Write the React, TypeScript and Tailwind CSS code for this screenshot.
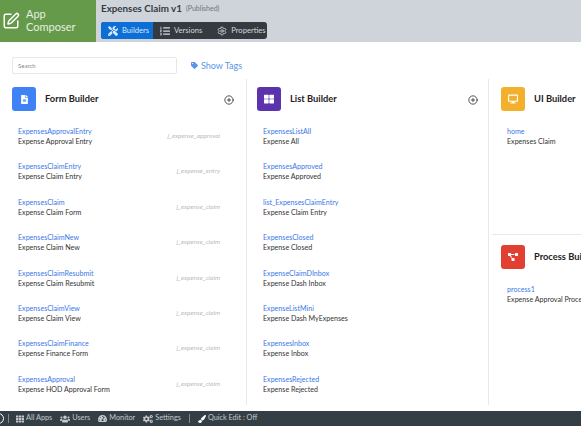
import { PlusCircle, Settings, SquarePen } from "lucide-react";
import { FaCogs, FaDesktop, FaFileAlt, FaListOl, FaPaintBrush, FaProjectDiagram, FaTachometerAlt, FaTag, FaTh, FaThLarge, FaTools, FaUsers } from "react-icons/fa";
import type { ReactNode } from "react";

const forms = [
	["ExpensesApprovalEntry", "Expense Approval Entry", "j_expense_approval"],
	["ExpensesClaimEntry", "Expense Claim Entry", "j_expense_entry"],
	["ExpensesClaim", "Expense Claim Form", "j_expense_claim"],
	["ExpensesClaimNew", "Expense Claim New", "j_expense_claim"],
	["ExpensesClaimResubmit", "Expense Claim Resubmit", "j_expense_claim"],
	["ExpensesClaimView", "Expense Claim View", "j_expense_claim"],
	["ExpensesClaimFinance", "Expense Finance Form", "j_expense_claim"],
	["ExpensesApproval", "Expense HOD Approval Form", "j_expense_claim"],
];

const lists = [
	["ExpensesListAll", "Expense All"],
	["ExpensesApproved", "Expense Approved"],
	["list_ExpensesClaimEntry", "Expense Claim Entry"],
	["ExpensesClosed", "Expense Closed"],
	["ExpenseClaimDInbox", "Expense Dash Inbox"],
	["ExpenseListMini", "Expense Dash MyExpenses"],
	["ExpensesInbox", "Expense Inbox"],
	["ExpensesRejected", "Expense Rejected"],
];

function BuilderHeader({ color, icon, title, add }: { color: string; icon: ReactNode; title: string; add?: boolean }) {
	return (
		<div className="flex h-6 items-center">
			<div className={`flex h-6 w-6 shrink-0 items-center justify-center rounded-[3px] text-white ${color}`}>{icon}</div>
			<div className="ml-[9px] whitespace-nowrap text-[9.3px] font-bold text-[#222]">{title}</div>
			{add && <PlusCircle className="ml-auto mt-[2px] h-[10px] w-[10px] text-[#333]" strokeWidth={2} />}
		</div>
	);
}

function Item({ name, label, tag }: { name: string; label: string; tag?: string }) {
	return (
		<div className="flex h-[35.4px] items-start justify-between whitespace-nowrap">
			<div className="text-[7.1px] leading-[10px]">
				<div className="text-[#3b78e7]">{name}</div>
				<div className="text-[#333]">{label}</div>
			</div>
			{tag && <div className="mt-[4px] text-[6.5px] italic leading-[10px] text-[#bbb]">{tag}</div>}
		</div>
	);
}

function Tab({ icon, label, active }: { icon: ReactNode; label: string; active?: boolean }) {
	return (
		<div className={`flex h-full items-center gap-[4px] pl-[7px] pr-[4px] text-[7.6px] ${active ? "rounded-l-[3px] bg-[#0b6fd6] text-[#dbe9fb]" : "text-[#d5d8db]"}`}>
			{icon}
			{label}
		</div>
	);
}

function FootItem({ icon, label }: { icon: ReactNode; label: string }) {
	return (
		<div className="flex items-center gap-[2px] whitespace-nowrap">
			{icon}
			{label}
		</div>
	);
}

export default function App() {
	return (
		<div className="flex h-[426px] w-[581px] flex-col overflow-hidden bg-white font-['Lato',sans-serif]">
			{/* Top bar */}
			<div className="flex h-[42px] shrink-0 bg-[#ced4da]">
				<div className="flex w-[96px] items-center bg-[#659a4b] pl-[2px] text-white">
					<SquarePen className="h-[18px] w-[18px]" strokeWidth={2} />
					<div className="mb-[3px] ml-[6px] text-[11px] leading-[13px] text-[#e6efe0]">
						App
						<br />
						Composer
					</div>
				</div>
				<div className="ml-[5px] pt-[2px]">
					<div className="flex h-[12px] items-center whitespace-nowrap text-[9.8px] font-bold text-[#343a40]">
						Expenses Claim v1
						<span className="ml-[4px] text-[7px] font-normal text-[#6c757d]">(Published)</span>
					</div>
					<div className="mt-[8px] flex h-[17px] w-[166px] rounded-[3px] bg-[#343a40]">
						<Tab active icon={<FaTools className="h-[10px] w-[10px]" />} label="Builders" />
						<Tab icon={<FaListOl className="h-[10px] w-[10px]" />} label="Versions" />
						<Tab icon={<Settings className="ml-[4px] h-[10px] w-[10px]" />} label="Properties" />
					</div>
				</div>
			</div>

			{/* Search */}
			<div className="flex shrink-0 items-center px-[12px] pt-[15px]">
				<div className="flex h-[17px] w-[165px] items-center rounded-[2px] border border-[#e4e6e8] pl-[5px] text-[6px] text-[#888]">Search</div>
				<div className="ml-[14px] flex items-center gap-[3px] text-[9px] text-[#5a96e8]">
					<FaTag className="h-[7px] w-[7px]" />
					Show Tags
				</div>
			</div>

			{/* Builders */}
			<div className="mb-[6px] mt-[5px] flex min-h-0 flex-1">
				<div className="w-[247px] shrink-0 border-r border-[#e8e8e8] pl-[12px] pr-[12px] pt-[8px]">
					<BuilderHeader color="bg-[#3f82f5]" icon={<FaFileAlt className="h-[9px] w-[9px]" />} title="Form Builder" add />
					<div className="mt-[16px] pl-[6px] pr-[14px]">
						{forms.map(([name, label, tag]) => (
							<Item key={name} name={name} label={label} tag={tag} />
						))}
					</div>
				</div>
				<div className="w-[242px] shrink-0 border-r border-[#e8e8e8] pl-[10px] pr-[10px] pt-[8px]">
					<BuilderHeader color="bg-[#5b34ad]" icon={<FaThLarge className="h-[10px] w-[10px]" />} title="List Builder" add />
					<div className="mt-[16px] pl-[6px]">
						{lists.map(([name, label]) => (
							<Item key={name} name={name} label={label} />
						))}
					</div>
				</div>
				<div className="min-w-0 flex-1 overflow-hidden">
					<div className="h-[155px] pl-[12px] pt-[8px]">
						<BuilderHeader color="bg-[#f3b02c]" icon={<FaDesktop className="h-[10px] w-[10px]" />} title="UI Builder" />
						<div className="mt-[16px] pl-[6px]">
							<Item name="home" label="Expenses Claim" />
						</div>
					</div>
					<div className="ml-[3px] border-t border-[#e8e8e8] pl-[9px] pt-[10px]">
						<BuilderHeader color="bg-[#e23f33]" icon={<FaProjectDiagram className="h-[10px] w-[10px]" />} title="Process Builder" />
						<div className="mt-[16px] pl-[6px]">
							<Item name="process1" label="Expense Approval Process" />
						</div>
					</div>
				</div>
			</div>

			{/* Bottom bar */}
			<div className="flex h-[15px] shrink-0 items-center bg-[#343f45] text-[7.3px] text-[#c3c9cc]">
				<div className="ml-[-7px] h-[11px] w-[11px] rounded-full border border-white" />
				<div className="ml-[4px] h-[9px] w-px bg-[#7d878c]" />
				<div className="ml-[7px] flex items-center gap-[8px]">
					<FootItem icon={<FaTh className="h-[8px] w-[8px]" />} label="All Apps" />
					<FootItem icon={<FaUsers className="h-[10px] w-[10px]" />} label="Users" />
					<FootItem icon={<FaTachometerAlt className="h-[9px] w-[9px]" />} label="Monitor" />
					<FootItem icon={<FaCogs className="h-[10px] w-[10px]" />} label="Settings" />
				</div>
				<div className="ml-[8px] h-[9px] w-px bg-[#7d878c]" />
				<div className="ml-[8px]">
					<FootItem icon={<FaPaintBrush className="h-[8px] w-[8px] text-white" />} label="Quick Edit : Off" />
				</div>
			</div>
		</div>
	);
}
